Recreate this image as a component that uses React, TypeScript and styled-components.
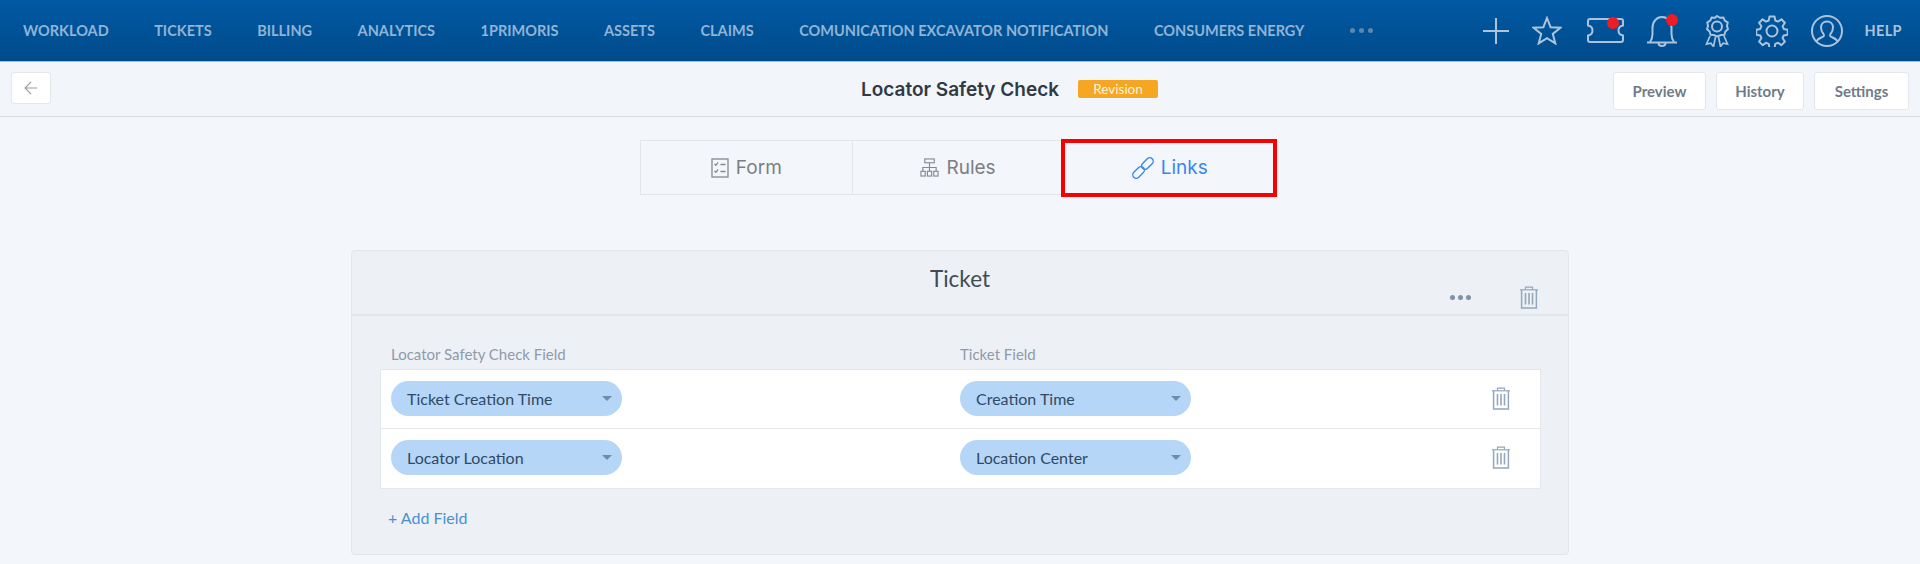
import styled, { createGlobalStyle } from 'styled-components';

const navItems = [
  'WORKLOAD',
  'TICKETS',
  'BILLING',
  'ANALYTICS',
  '1PRIMORIS',
  'ASSETS',
  'CLAIMS',
  'COMUNICATION EXCAVATOR NOTIFICATION',
  'CONSUMERS ENERGY',
];

const links = [
  { id: 1, source: 'Ticket Creation Time', target: 'Creation Time' },
  { id: 2, source: 'Locator Location', target: 'Location Center' },
];

function TrashIcon() {
  return (
    <svg width="20" height="23" viewBox="0 0 20 23" fill="none" stroke="#93a7bd" strokeWidth="1.2">
      <path d="M1 3.8h18" />
      <path d="M6.500 3.500V1.200h7v2.300" />
      <path d="M2.600 4v18h14.800V4" strokeWidth="1.500" />
      <path d="M6.500 7v11.500M10 7v11.500M13.500 7v11.500" strokeWidth="1.600" />
    </svg>
  );
}

export default function App() {
  return (
    <>
      <GlobalStyle />
      <Nav>
        <NavLinks>
          {navItems.map((item) => {
            return <NavLink key={item}>{item}</NavLink>;
          })}
          <NavDots>
            <i />
            <i />
            <i />
          </NavDots>
        </NavLinks>
        <NavIcons>
          <IconSlot>
            <svg width="26" height="26" viewBox="0 0 26 26" fill="none" stroke="#a9c4dc" strokeWidth="2">
              <path d="M13 0v26M0 13h26" />
            </svg>
          </IconSlot>
          <IconSlot $gap={23}>
            <svg width="30" height="29" viewBox="0 0 30 29" fill="none" stroke="#a9c4dc" strokeWidth="2">
              <path d="M15 2l3.600 9.200 9.800.5-7.600 6.200 2.500 9.500L15 22.100l-8.300 5.300 2.500-9.500-7.600-6.200 9.800-.5z" />
            </svg>
          </IconSlot>
          <IconSlot $gap={25}>
            <svg width="37" height="25" viewBox="0 0 37 25" fill="none" stroke="#a9c4dc" strokeWidth="2">
              <path d="M3 1h31a2 2 0 0 1 2 2v4.500c-3 .6-4.500 2.600-4.500 5s1.500 4.400 4.500 5V22a2 2 0 0 1-2 2H3a2 2 0 0 1-2-2v-4.500c3-.6 4.500-2.600 4.500-5S4 8.100 1 7.500V3a2 2 0 0 1 2-2z" />
            </svg>
            <RedDot $right={5} />
          </IconSlot>
          <IconSlot $gap={22}>
            <svg width="32" height="32" viewBox="0 0 32 32" fill="none" stroke="#a9c4dc" strokeWidth="2">
              <path d="M1 27.500h30" />
              <path d="M4 27c1.600-2 2.500-4 2.500-8v-6C6.500 6.500 10.500 2 16 2s9.500 4.500 9.500 11v6c0 4 .9 6 2.500 8" />
              <path d="M12.500 28c0 2 1.500 3 3.500 3s3.500-1 3.500-3" />
            </svg>
            <RedDot $right={0} />
          </IconSlot>
          <IconSlot $gap={26}>
            <svg width="26" height="32" viewBox="0 0 26 32" fill="none" stroke="#a9c4dc" strokeWidth="2">
              <path d="M13 1l3 1.800 3.400-.3 1.400 3.100 2.900 1.900-.7 3.400.9 3.300-2.500 2.300-1 3.300-3.400.3L13 21.500l-3-1.400-3.400-.3-1-3.300-2.500-2.300.9-3.300-.7-3.400 2.900-1.900 1.400-3.100 3.400.3z" />
              <circle cx="13" cy="11.500" r="5" />
              <path d="M6 21l-3.500 8 4.300-.8L9.500 31.500l2-9.500M20 21l3.500 8-4.300-.8-2.700 3.300-2-9.500" strokeWidth="1.700" />
            </svg>
          </IconSlot>
          <IconSlot $gap={26}>
            <svg width="32" height="32" viewBox="0 0 32 32" fill="none" stroke="#a9c4dc" strokeWidth="2">
              <path d="M13.500 1.500h5l.8 4 2.700 1.100 3.400-2.300 3.500 3.500-2.300 3.400 1.100 2.700 4 .8v5l-4 .8-1.100 2.700 2.300 3.400-3.500 3.500-3.400-2.300-2.700 1.100-.8 4h-5l-.8-4-2.700-1.100-3.400 2.300-3.500-3.500 2.300-3.400-1.100-2.700-4-.8v-5l4-.8 1.100-2.700-2.300-3.400 3.500-3.500L10 6.600l2.700-1.100z" strokeLinejoin="round" />
              <circle cx="16" cy="16" r="5.500" />
            </svg>
          </IconSlot>
          <IconSlot $gap={23}>
            <svg width="32" height="32" viewBox="0 0 32 32" fill="none" stroke="#a9c4dc" strokeWidth="2">
              <circle cx="16" cy="16" r="15" />
              <path d="M5.500 26.500c.8-3 5-3.800 6.800-5 .8-.6.800-1.700.2-2.500-1.600-1.900-2.500-4-2.500-6.500C10 9 12.500 6.500 16 6.500s6 2.500 6 6c0 2.500-.9 4.600-2.500 6.500-.6.800-.6 1.900.2 2.500 1.800 1.200 6 2 6.800 5" />
            </svg>
          </IconSlot>
          <HelpLink>HELP</HelpLink>
        </NavIcons>
      </Nav>

      <Toolbar>
        <div>
          <BackButton>
            <svg width="14" height="14" viewBox="0 0 14 14" fill="none" stroke="#9a9fa6" strokeWidth="1.100">
              <path d="M13 7H1M7 1L1 7l6 6" />
            </svg>
          </BackButton>
        </div>
        <Title>
          Locator Safety Check
          <Badge>Revision</Badge>
        </Title>
        <Actions>
          <ActionButton $width={93}>Preview</ActionButton>
          <ActionButton $width={88}>History</ActionButton>
          <ActionButton $width={95}>Settings</ActionButton>
        </Actions>
      </Toolbar>

      <TabRow>
        <Tab>
          <svg width="18" height="20" viewBox="0 0 18 20" fill="none" stroke="#858a90" strokeWidth="1.300">
            <rect x="1" y="1" width="16" height="18" />
            <path d="M3.500 6l1.300 1.300L7 4.500M3.500 13l1.300 1.300L7 11.500" />
            <path d="M9.500 6.500h5M9.500 13.500h5" />
          </svg>
          Form
        </Tab>
        <Tab>
          <svg width="19" height="19" viewBox="0 0 20 20" fill="none" stroke="#858a90" strokeWidth="1.200">
            <rect x="5" y="1" width="10" height="4" />
            <path d="M10 5v5M3 14v-4h14v4M10 10v4" />
            <rect x="1" y="14" width="4.500" height="5" />
            <rect x="7.800" y="14" width="4.500" height="5" />
            <rect x="14.500" y="14" width="4.500" height="5" />
          </svg>
          Rules
        </Tab>
        <Tab $active>
          <svg width="22" height="22" viewBox="0 0 22 22" fill="none" stroke="#3b86ee" strokeWidth="1.400">
            <g transform="rotate(45 11 11)">
              <rect x="7.500" y="-2" width="7" height="13.500" rx="3.500" />
              <rect x="7.500" y="10.500" width="7" height="13.500" rx="3.500" />
            </g>
          </svg>
          Links
          <Highlight />
        </Tab>
      </TabRow>

      <Card>
        <CardHeader>
          <CardTitle>Ticket</CardTitle>
          <CardTools>
            <Dots>
              <i />
              <i />
              <i />
            </Dots>
            <TrashIcon />
          </CardTools>
        </CardHeader>
        <CardBody>
          <Labels>
            <span>Locator Safety Check Field</span>
            <span>Ticket Field</span>
          </Labels>
          <Table>
            {links.map(({ id, source, target }) => {
              return (
                <Row key={id}>
                  <Pill>{source}</Pill>
                  <Pill>{target}</Pill>
                  <RowTrash>
                    <TrashIcon />
                  </RowTrash>
                </Row>
              );
            })}
          </Table>
          <AddField>+ Add Field</AddField>
        </CardBody>
      </Card>
    </>
  );
}

const GlobalStyle = createGlobalStyle`
  html, body {
    margin: 0;
    height: 564px;
    overflow: hidden;
    background: #f3f6fb;
    font-family: Lato, "Liberation Sans", sans-serif;
  }
`;

const Nav = styled.div`
  display: flex;
  align-items: center;
  justify-content: space-between;
  height: 61px;
  padding: 0 18px 0 23px;
  background: linear-gradient(#0059a3, #004b8b);
  border-bottom: 1px solid #9cc0e0;
`;
const NavLinks = styled.div`
  display: flex;
  align-items: center;
  gap: 45.5px;
`;
const NavLink = styled.span`
  font-size: 14.5px;
  font-weight: 700;
  color: #8fb4d6;
  white-space: nowrap;
`;
const NavDots = styled.span`
  display: flex;
  gap: 4px;
  i {
    width: 5px;
    height: 5px;
    border-radius: 50%;
    background: #5d87ad;
  }
`;
const NavIcons = styled.div`
  display: flex;
  align-items: center;
`;
const IconSlot = styled.span<{ $gap?: number }>`
  position: relative;
  display: flex;
  margin-left: ${(p) => p.$gap ?? 0}px;
`;
const RedDot = styled.i<{ $right: number }>`
  position: absolute;
  top: -1px;
  right: ${(p) => p.$right}px;
  width: 12px;
  height: 12px;
  border-radius: 50%;
  background: #ee1c25;
`;
const HelpLink = styled.span`
  margin-left: 21px;
  font-size: 14.5px;
  font-weight: 700;
  letter-spacing: 0.4px;
  color: #a9c4dc;
`;

const Toolbar = styled.div`
  display: grid;
  grid-template-columns: 1fr auto 1fr;
  align-items: start;
  height: 55px;
  padding: 10px 11px 0;
  box-sizing: border-box;
  background: #f2f5f9;
  border-bottom: 1px solid #d8dce0;
`;
const BackButton = styled.button`
  display: flex;
  align-items: center;
  justify-content: center;
  width: 40px;
  height: 32px;
  padding: 0;
  background: #fff;
  border: 1px solid #e4e7eb;
  border-radius: 3px;
`;
const Title = styled.div`
  position: relative;
  padding-top: 6px;
  font-family: Inter, sans-serif;
  font-size: 19px;
  font-weight: 600;
  color: #2f3a45;
`;
const Badge = styled.span`
  position: absolute;
  top: 8px;
  left: calc(100% + 19px);
  width: 80px;
  height: 18px;
  line-height: 18px;
  text-align: center;
  font-family: Lato, sans-serif;
  font-size: 13.5px;
  font-weight: 400;
  color: #fff4dd;
  background: #f5a623;
  border-radius: 2px;
`;
const Actions = styled.div`
  display: flex;
  justify-content: flex-end;
  gap: 10px;
`;
const ActionButton = styled.button<{ $width: number }>`
  width: ${(p) => p.$width}px;
  height: 38px;
  padding: 0;
  font-family: inherit;
  font-size: 15px;
  font-weight: 700;
  color: #6f7b88;
  background: #fff;
  border: 1px solid #e4e7eb;
  border-radius: 3px;
`;

const TabRow = styled.div`
  display: flex;
  width: 636px;
  height: 55px;
  margin: 23px 0 0 640px;
  box-sizing: border-box;
  border: 1px solid #e2e6ea;
`;
const Tab = styled.div<{ $active?: boolean }>`
  position: relative;
  flex: 1;
  display: flex;
  align-items: center;
  justify-content: center;
  gap: 7px;
  font-family: Inter, sans-serif;
  font-size: 19px;
  color: ${(p) => (p.$active ? '#3b86ee' : '#7b7f84')};
  & + & {
    border-left: 1px solid #e2e6ea;
  }
`;
const Highlight = styled.span`
  position: absolute;
  top: -2px;
  right: -2px;
  bottom: -3px;
  left: -3px;
  border: 4px solid #f90000;
`;

const Card = styled.div`
  box-sizing: border-box;
  width: 1218px;
  height: 305px;
  margin: 55px 0 0 351px;
  background: #edf1f6;
  border: 1px solid #e3e7ec;
  border-radius: 4px;
`;
const CardHeader = styled.div`
  position: relative;
  height: 63px;
  border-bottom: 2px solid #e3e7ec;
  text-align: center;
`;
const CardTitle = styled.div`
  padding-top: 14px;
  font-size: 22.5px;
  color: #414b55;
`;
const CardTools = styled.div`
  position: absolute;
  top: 35px;
  right: 29px;
  display: flex;
  align-items: center;
  gap: 48px;
`;
const Dots = styled.span`
  display: flex;
  gap: 3px;
  i {
    width: 5px;
    height: 5px;
    border-radius: 50%;
    background: #7d92a8;
  }
`;
const CardBody = styled.div`
  padding: 29px 28px 0;
`;
const Labels = styled.div`
  display: grid;
  grid-template-columns: 569px 1fr;
  padding-left: 11px;
  height: 24px;
  font-size: 15px;
  color: #8d9bab;
`;
const Table = styled.div`
  box-sizing: border-box;
  width: 1161px;
  background: #fff;
  border: 1px solid #e3e7ec;
`;
const Row = styled.div`
  display: grid;
  grid-template-columns: 569px 231px 1fr;
  align-items: start;
  box-sizing: border-box;
  height: 58px;
  padding: 11px 0 0 10px;
  & + & {
    height: 60px;
    border-top: 1px solid #e3e7ec;
  }
`;
const Pill = styled.div`
  position: relative;
  box-sizing: border-box;
  width: 231px;
  height: 35px;
  line-height: 35px;
  padding-left: 16px;
  font-size: 16px;
  color: #2f4a66;
  background: #b6d6f7;
  border-radius: 18px;
  &::after {
    content: '';
    position: absolute;
    top: 15px;
    right: 10px;
    border-left: 5px solid transparent;
    border-right: 5px solid transparent;
    border-top: 5px solid #6f8dab;
  }
`;
const RowTrash = styled.div`
  display: flex;
  justify-content: flex-end;
  padding: 6px 29px 0 0;
`;
const AddField = styled.div`
  margin: 19px 0 0 8px;
  font-size: 16px;
  color: #4a90d0;
`;
